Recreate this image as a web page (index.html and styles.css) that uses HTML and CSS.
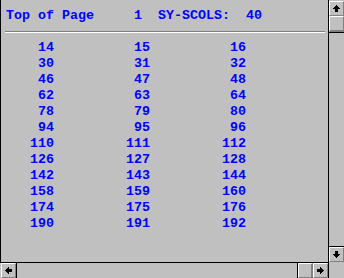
FILE: index.html
```html
<!DOCTYPE html>
<html lang="en">
<head>
    <meta charset="UTF-8">
    <title>List Output</title>
    <link rel="stylesheet" href="styles.css">
</head>
<body>
    <div class="window">
        <div class="content">
            <div class="line">Top of Page     1  SY-SCOLS:  40</div>
            <div class="sep"><div class="rule"></div></div>
            <div class="line">    14          15          16</div>
            <div class="line">    30          31          32</div>
            <div class="line">    46          47          48</div>
            <div class="line">    62          63          64</div>
            <div class="line">    78          79          80</div>
            <div class="line">    94          95          96</div>
            <div class="line">   110         111         112</div>
            <div class="line">   126         127         128</div>
            <div class="line">   142         143         144</div>
            <div class="line">   158         159         160</div>
            <div class="line">   174         175         176</div>
            <div class="line">   190         191         192</div>
        </div>

        <div class="vscroll">
            <div class="btn">
                <svg width="7" height="7" viewBox="0 0 7 7"><path d="M3 0h1v1H3zM2 1h3v1H2zM1 2h5v1H1zM0 3h7v1H0zM2 4h3v3H2z"/></svg>
            </div>
            <div class="thumb"></div>
            <div class="track-v"></div>
            <div class="btn">
                <svg width="7" height="7" viewBox="0 0 7 7"><path d="M2 0h3v3H2zM0 3h7v1H0zM1 4h5v1H1zM2 5h3v1H2zM3 6h1v1H3z"/></svg>
            </div>
        </div>

        <div class="hscroll">
            <div class="btn btn-left">
                <svg width="7" height="7" viewBox="0 0 7 7"><path d="M0 3h1v1H0zM1 2h1v3H1zM2 1h1v5H2zM3 0h1v7H3zM4 2h3v3H4z"/></svg>
            </div>
            <div class="track-h"></div>
            <div class="thumb thumb-h"></div>
            <div class="btn btn-right">
                <svg width="7" height="7" viewBox="0 0 7 7"><path d="M0 2h3v3H0zM3 0h1v7H3zM4 1h1v5H4zM5 2h1v3H5zM6 3h1v1H6z"/></svg>
            </div>
        </div>

        <div class="corner"></div>
    </div>
</body>
</html>
```

FILE: styles.css
```css
* {
    box-sizing: border-box;
}

body {
    margin: 0;
    padding: 0;
    background: #c0c0c0;
}

.window {
    display: grid;
    grid-template-columns: 329px 15px;
    grid-template-rows: 263px 15px;
    width: 344px;
    height: 278px;
    background: #c0c0c0;
}

.content {
    border-left: 1px solid #000;
    border-right: 1px solid #000;
    border-bottom: 1px solid #000;
    padding: 8px 3px 0 5px;
    overflow: hidden;
    font-family: "Liberation Mono", "DejaVu Sans Mono", monospace;
    font-size: 13.34px;
    font-weight: bold;
    color: #0000ff;
}

.line {
    height: 16px;
    line-height: 16px;
    white-space: pre;
}

.sep {
    height: 16px;
    padding-top: 7px;
}

.rule {
    width: 320px;
    margin-left: -1px;
    height: 2px;
    border-top: 1px solid #808080;
    border-bottom: 1px solid #fff;
}

.btn {
    display: flex;
    justify-content: center;
    align-items: center;
    width: 15px;
    height: 15px;
    background: #c0c0c0;
    border-top: 1px solid #fff;
    border-left: 1px solid #fff;
    border-right: 1px solid #808080;
    border-bottom: 1px solid #808080;
}

.btn svg {
    display: block;
    fill: #000;
    shape-rendering: crispEdges;
}

.thumb {
    height: 16px;
    background: #c0c0c0;
    border-top: 1px solid #fff;
    border-left: 1px solid #fff;
    border-right: 1px solid #808080;
    border-bottom: 2px solid #808080;
}

/* scrollbars */
.vscroll {
    display: flex;
    flex-direction: column;
    padding: 1px 0;
}

.track-v {
    flex: 1;
    border-top: 1px solid #000;
    border-bottom: 1px solid #000;
}

.hscroll {
    display: flex;
    padding-left: 1px;
    border-right: 1px solid #000;
}

.track-h {
    flex: 1;
    border-left: 1px solid #000;
    border-right: 1px solid #000;
}

.thumb-h {
    width: 15px;
    height: 15px;
    border-bottom: 1px solid #808080;
    border-right: 2px solid #808080;
}

.btn-right {
    width: 15px;
}

.corner {
    background: #c0c0c0;
}
```
